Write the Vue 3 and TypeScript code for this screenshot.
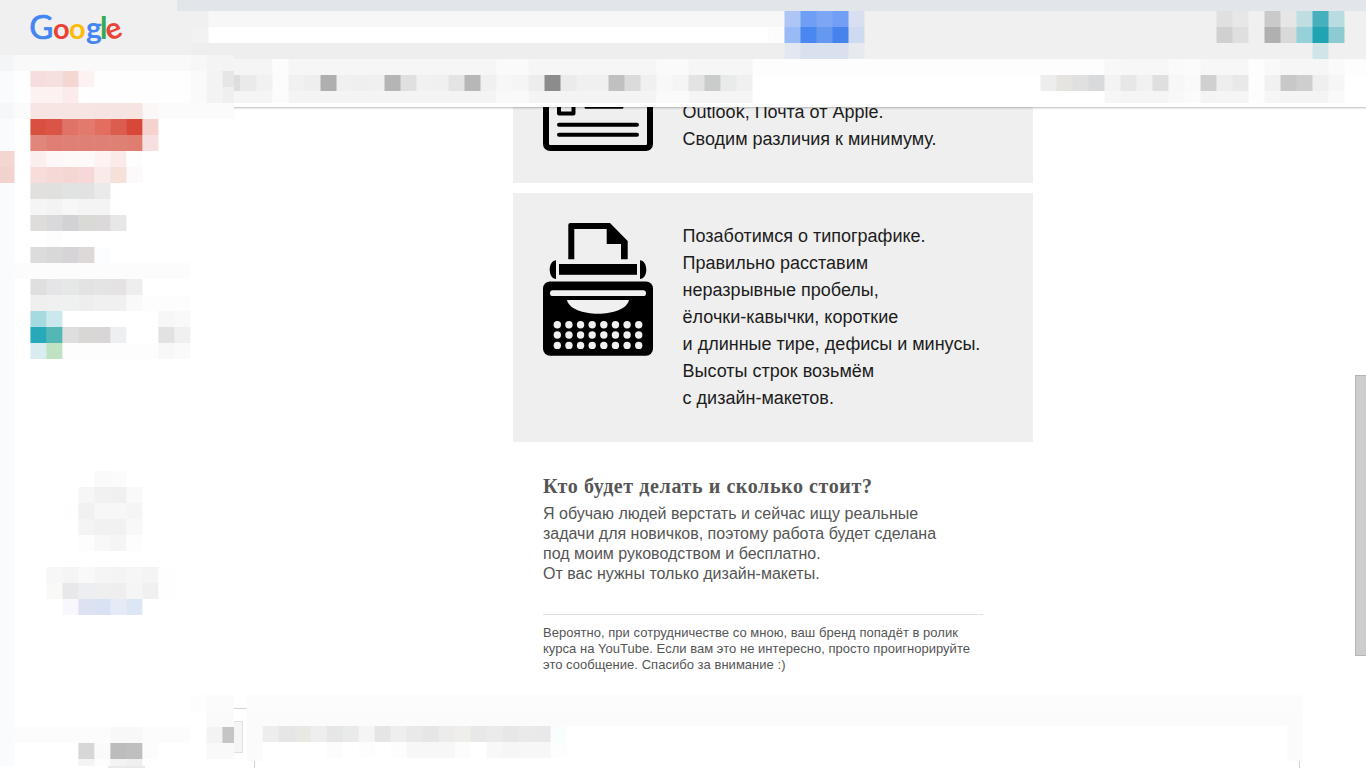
<script setup lang="ts">
interface Cell { x: number; y: number; w: number; h: number; fill: string }

const CELL = 16

/* One horizontal run of blocks. Each block reaches slightly under its neighbour, so no seam shows. */
function run(x: number, y: number, colors: string, h: number = CELL): Cell[] {
  const list = colors.split(' ')
  return list
    .map((c, i) => ({
      x: x + i * CELL,
      y,
      w: i < list.length - 1 && list[i + 1] !== '-' ? CELL + 0.5 : CELL,
      h,
      fill: '#' + c
    }))
    .filter((c) => c.fill !== '#-')
}

function block(x: number, y: number, w: number, h: number, color: string): Cell {
  return { x, y, w, h, fill: '#' + color }
}

const headerCells: Cell[] = [
  block(177, 0, 1189, 11, 'e2e5ea'),
  block(192.5, 27, 16, 16, 'f2f2f2'),
  block(208.5, 11, 576, 16, 'f7f7f7'),
  block(208.5, 27, 560, 16, 'ffffff'),
  block(768.5, 27, 16, 16, 'fcfcfc'),
  block(192.5, 43, 592, 16, 'eeeeee'),
  ...run(784.5, 11, 'adc6f5 6f9ff5 7da7f4 729ff5 d7dff1'),
  ...run(784.5, 27, '98baf5 4a87f0 6698f0 4683ed cedaf0'),
  ...run(784.5, 43, 'e3e7ef dae1ee dae1ee dae1ee e7eaef'),
  ...run(1216.5, 11, 'e0e0e0 e7e7e7 - cacaca e6e6e6 c0dde2 46b0bc b8dce0'),
  ...run(1216.5, 27, 'd0d0d0 dfdfdf - b0b0b0 d9d9d9 96d0d8 20a3b2 8dcad1'),
  ...run(1312.5, 43, 'd0e5e8')
]

const toolbarCells: Cell[] = [
  block(0, 0, 1366, 16, 'fdfdfd'),
  block(234, 0, 38.5, 44, 'f5f5f5'),
  block(272.5, 0, 16, 44, 'fcfcfc'),
  block(288.5, 0, 208, 16, 'f6f6f6'),
  block(288.5, 32, 208, 12, 'f4f4f4'),
  block(496.5, 0, 32, 16, 'fafafa'),
  block(496.5, 32, 32, 12, 'f9f9f9'),
  block(528.5, 0, 128, 16, 'f6f6f6'),
  block(528.5, 32, 128, 12, 'f4f4f4'),
  block(656.5, 0, 32, 44, 'fafafa'),
  block(688.5, 0, 64, 16, 'f6f6f6'),
  block(688.5, 32, 64, 12, 'f5f5f5'),
  block(234, 16, 6.5, 16, 'dedede'),
  ...run(
    240.5,
    16,
    'eaeaea f1f1f1 fcfcfc f1f1f1 eeeeee afafaf f0f0f0 efefef f0f0f0 b5b5b5 e0e0e0 f1f1f1 f0f0f0 e4e4e4 b7b7b7 f0f0f0 f7f7f7 f5f5f5 ededed 8c8c8c ebebeb f0f0f0 f0f0f0 c0c0c0 dbdbdb f0f0f0 f8f8f8 f5f5f5 e3e3e3 cacccb e9ebea f0f0f0'
  ),
  ...run(
    1104.5,
    0,
    'f8f8f8 f7f7f7 f7f7f7 f7f7f7 fafafa fbfbfb f7f7f7 f7f7f7 f7f7f7 fdfdfd f9f9f9 f6f6f6 f6f6f6 f6f6f6 fafafa'
  ),
  ...run(
    1040.5,
    16,
    'ededed e5e4e1 e0e0e0 d8dadc f3f3f3 e7e7e7 f1f1f1 dfdfdf f7f7f7 fafafa d0d0d0 eeeeee e9e9e9 fdfdfd f1f1f1 c8c8c8 cecece efefef f6f6f6'
  ),
  ...run(
    1104.5,
    32,
    'f6f6f6 f5f5f5 f5f5f5 f5f5f5 f8f8f8 fbfbfb f4f4f4 f5f5f5 f5f5f5 fdfdfd f6f6f6 f4f4f4 f4f4f4 f4f4f4 f9f9f9',
    12
  )
]

const SIDE = 30.4

const sidebarCells: Cell[] = [
  block(14.5, 55, 219.5, 64, 'fefefe'),
  block(0, 55, 14.5, 711, 'f9fbfd'),
  block(0, 55, 14.5, 16, 'f3f5f7'),
  block(14.5, 55, 176, 16, 'f9f9f9'),
  block(190.4, 55, 16, 16, 'f7f7f7'),
  block(206.4, 55, 27.6, 16, 'f4f4f4'),
  ...run(SIDE, 71, 'f6dedd f6e0df f4d6d3 fcf2f2'),
  ...run(SIDE, 87, 'fcf2f1 fcf2f1 fbeceb'),
  block(190.4, 71, 16, 32, 'fafafa'),
  block(206.4, 71, 16, 32, 'f3f3f3'),
  block(222.4, 71, 11.6, 16, 'e6e6e6'),
  block(222.4, 87, 11.6, 16, 'efefef'),
  block(0, 103, 14.5, 16, 'f5f7f9'),
  block(14.5, 103, 219.5, 16, 'fbfbfb'),
  ...run(SIDE, 103, 'f6e5e3 f6e5e2 f6e5e2 f6e5e2 f6e4e2 f6e4e2 f6e4e1 fbf7f6'),
  ...run(SIDE, 119, 'd9503e da5447 e07268 e27a70 e26e5f dc5c4f d84838 f5d2cd'),
  ...run(SIDE, 135, 'e1867b e07e73 df8074 df8074 df8074 df8074 e07d71 f6e0df'),
  block(0, 151, 14.5, 16, 'f3d6d2'),
  block(0, 167, 14.5, 16, 'f1d2ce'),
  ...run(SIDE, 151, 'fbefee fdf8f7 fdf9f8 fdf9f8 fcf3f2 faeae8 fefdfd'),
  ...run(SIDE, 167, 'f7dcdc f5d9d6 f4d7d3 f6d8d8 faebea f6e0da fdf9fb'),
  ...run(SIDE, 183, 'e1e0de e0e0df e1e3e2 e1e2e1 eaeaea'),
  ...run(SIDE, 199, 'f5f5f5 f3f3f3 f7f7f7 f4f4f4 f4f4f4'),
  ...run(SIDE, 215, 'dedddb d9d8da d2d2d4 d9d9d6 dcd9da e7e7e7'),
  ...run(46.4, 231, 'fdfdfd'),
  ...run(SIDE, 247, 'dcdcdc d8d8d8 d6d4d7 ded9d7 fcfdff'),
  block(14.5, 263, 176, 16, 'fcfcfc'),
  ...run(SIDE, 279, 'dfdfdf e5e5e8 e6e8e7 e3e3e3 e4e4e4 e4e2e2 eeeeee'),
  ...run(SIDE, 295, 'efefef f0f0f0 eff1f0 eeeeee f0f0f0 f0f0f0 f9f9f9 fdfdfd fdfdfd fdfdfd'),
  ...run(SIDE, 311, 'a5dae0 cbe9ec'),
  ...run(158.4, 311, 'f7f7f7 f9f9f9'),
  ...run(SIDE, 327, '27a9b9 53b7b6 dedede d8d7d5 d9d6d7 eeeff1'),
  ...run(158.4, 327, 'e2e2e2 f0f0f0'),
  ...run(SIDE, 343, 'd9edf0 bfe3c2 fdfdfd fdfdfd fdfdfd fdfdfd fdfdfd fdfdfd f8f8f8 fafafa'),
  ...run(94.4, 471, 'fafafa fbfbfb'),
  ...run(78.4, 487, 'f6f6f6 f1f1f1 f0f0f0 f9f9f9'),
  ...run(62.4, 503, 'fefefe f1f1f1 f7f7f7 f7f7f7 f5f5f5'),
  ...run(78.4, 519, 'f4f4f4 f1f1f1 f1f1f1 f8f8f8'),
  ...run(78.4, 535, 'fdfdfd f8f8f8 f5f5f5 fdfdfd'),
  ...run(46.4, 567, 'f7f7f7 f5f5f5 f9f9f9 f5f5f5 f4f4f4 f6f6f6 f4f4f4 fefefe'),
  ...run(46.4, 583, 'f9faf7 e8e8ea eceef1 efefef eeeeee f5f5f5 f0f0f0 fefefe'),
  ...run(62.4, 599, 'f8f7fd dde2f2 d8e2f3 e6eaf6 dce6f4'),
  block(190.4, 695, 16, 16, 'fdfdfd'),
  block(206.4, 695, 27.6, 16, 'fbfbfb'),
  block(206.4, 711, 27.6, 16, 'fafafa'),
  block(14.5, 727, 176, 16, 'fcfcfc'),
  ...run(110.4, 727, 'f8f8f8 f8f8f8'),
  block(206.4, 727, 16, 16, 'f3f3f3'),
  block(222.4, 727, 11.6, 16, 'c5c5c5'),
  ...run(78.4, 743, 'd7d7d7 fafafa bcbcbc bfbfbf fcfcfc'),
  block(206.4, 743, 27.6, 16, 'f9f9f9'),
  ...run(78.4, 759, 'f4f4f4 fdfdfd f3f3f3 efefef', 7),
  block(108, 766, 37, 2, 'e9e9e9')
]

const composeCells: Cell[] = [
  block(0, 13, 13, 1, 'd4d4d4'),
  block(0, 26, 9, 32, 'e0e0e0'),
  block(0, 27, 8, 30, 'f5f5f5'),
  block(20, 60, 1, 13, 'd0d0d0'),
  block(1065, 60, 1, 13, 'd0d0d0'),
  block(12.7, 0, 1056.3, 66, 'fbfbfb'),
  block(12.7, 0, 1056.3, 15, 'fcfcfc'),
  block(29, 31, 1024, 35, 'ffffff'),
  ...run(
    28.7,
    31,
    'ededed e6e6e6 e8e8e5 eeeeee e6e6e6 e8ebea f5f5f5 e5e5e5 eeeeee e9e9e9 e6e6e6 ececea efeeea e8e8e8 ebebeb e7e7e7 eaeaea e9e9e9 fafdfd'
  ),
  ...run(
    92.7,
    47,
    'fcfcfc - fdfdfd - fdfdfd f7f7f7 f7f7f7 f7f7f7 fcfcfc - f8f8f8 f6f6f6 f7f7f7 f7f7f7 fdfdfd'
  )
]

const logoLetters = [
  { ch: 'G', x: 41.2, size: 33, weight: 400, turn: 0, color: '#4285f4' },
  { ch: 'o', x: 61.4, size: 29, weight: 700, turn: 0, color: '#ea4335' },
  { ch: 'o', x: 77.4, size: 29, weight: 700, turn: 0, color: '#fbbc05' },
  { ch: 'g', x: 94, size: 30, weight: 700, turn: 0, color: '#4285f4' },
  { ch: 'l', x: 103.8, size: 30, weight: 700, turn: 0, color: '#34a853' },
  { ch: 'e', x: 114, size: 30, weight: 700, turn: -22, color: '#ea4335' }
]

const mailLines = ['Outlook, Почта от Apple.', 'Сводим различия к минимуму.']
const typeLines = [
  'Позаботимся о типографике.',
  'Правильно расставим',
  'неразрывные пробелы,',
  'ёлочки-кавычки, короткие',
  'и длинные тире, дефисы и минусы.',
  'Высоты строк возьмём',
  'с дизайн-макетов.'
]
const offerLines = [
  'Я обучаю людей верстать и сейчас ищу реальные',
  'задачи для новичков, поэтому работа будет сделана',
  'под моим руководством и бесплатно.',
  'От вас нужны только дизайн-макеты.'
]
const noteLines = [
  'Вероятно, при сотрудничестве со мною, ваш бренд попадёт в ролик',
  'курса на YouTube. Если вам это не интересно, просто проигнорируйте',
  'это сообщение. Спасибо за внимание :)'
]

const keys = Array.from({ length: 24 }, (_, i) => ({
  cx: 14.3 + (i % 8) * 11.63,
  cy: 101.7 + Math.floor(i / 8) * 10.35
}))
</script>

<template>
  <div class="window">
    <header class="header">
      <svg width="1366" height="59" viewBox="0 0 1366 59">
        <rect v-for="(c, i) in headerCells" :key="i" :x="c.x" :y="c.y" :width="c.w" :height="c.h" :fill="c.fill" />
        <g class="logo">
          <text
            v-for="(l, i) in logoLetters"
            :key="i"
            :x="l.x"
            y="38.8"
            :font-size="l.size"
            :font-weight="l.weight"
            :fill="l.color"
            :stroke="l.color"
            :stroke-width="l.ch === 'G' ? 0.7 : 0"
            :transform="`rotate(${l.turn} ${l.x} 31.500)`"
          >{{ l.ch }}</text>
        </g>
      </svg>
    </header>

    <div class="toolbar">
      <svg width="1366" height="48" viewBox="0 0 1366 48">
        <rect v-for="(c, i) in toolbarCells" :key="i" :x="c.x" :y="c.y" :width="c.w" :height="c.h" :fill="c.fill" />
      </svg>
    </div>

    <main class="main">
      <aside class="sidebar">
        <svg width="234" height="713" viewBox="0 55 234 713">
          <rect v-for="(c, i) in sidebarCells" :key="i" :x="c.x" :y="c.y" :width="c.w" :height="c.h" :fill="c.fill" />
        </svg>
      </aside>

      <section class="pane">
        <article class="letter">
          <div class="card card-cut">
            <svg class="icon" width="110" height="52" viewBox="0 0 110 52" fill="none" stroke="#000">
              <path d="M3 0V45a4 4 0 0 0 4 4H103a4 4 0 0 0 4-4V0" stroke-width="6" />
              <path d="M16 0V14.500H30.500V0" stroke-width="4" stroke-linejoin="round" />
              <path d="M43 8.300H79" stroke-width="3" stroke-linecap="round" />
              <path d="M16 25.800H94M16 35.700H94" stroke-width="4" stroke-linecap="round" />
            </svg>
            <p class="lead"><span v-for="t in mailLines" :key="t">{{ t }}</span></p>
          </div>

          <div class="card">
            <svg class="icon" width="110" height="133" viewBox="0 0 110 133">
              <path
                fill-rule="evenodd"
                d="M25.300 36.300V2a2 2 0 0 1 2-2H67L84.700 18V36.300H78V21H63.700V6H31.300V36.300Z"
              />
              <rect x="16" y="41" width="78" height="10.800" />
              <path d="M13 37.300V56C9.500 56 6.700 52 6.700 46.700S9.500 37.300 13 37.300ZM97 37.300V56c3.500 0 6.300-4 6.300-9.300S100.500 37.300 97 37.300Z" />
              <rect x="0" y="58.400" width="110" height="74.300" rx="7" />
              <rect x="7" y="67.300" width="96" height="5.800" rx="2.900" fill="#f0f0f0" />
              <path d="M24 77H86C84 86 70 90.700 55 90.700S26 86 24 77Z" fill="#f0f0f0" />
              <circle v-for="(k, i) in keys" :key="i" :cx="k.cx" :cy="k.cy" r="3.700" fill="#f0f0f0" />
            </svg>
            <p class="lead"><span v-for="t in typeLines" :key="t">{{ t }}</span></p>
          </div>

          <div class="offer">
            <h2>Кто будет делать и сколько стоит?</h2>
            <p class="body"><span v-for="t in offerLines" :key="t">{{ t }}</span></p>
            <p class="note"><span v-for="t in noteLines" :key="t">{{ t }}</span></p>
          </div>
        </article>

        <svg class="compose" width="1069" height="73" viewBox="0 0 1069 73">
          <rect v-for="(c, i) in composeCells" :key="i" :x="c.x" :y="c.y" :width="c.w" :height="c.h" :fill="c.fill" />
        </svg>
      </section>

      <div class="scroll"><div class="thumb"></div></div>
    </main>
  </div>
</template>

<style>
body {
  margin: 0;
  background: #fff;
  overflow: hidden;
}
</style>

<style scoped>
.window {
  width: 1366px;
  height: 768px;
  display: flex;
  flex-direction: column;
  overflow: hidden;
  background: #fff;
  font-family: "Liberation Sans", Arial, sans-serif;
}
svg {
  display: block;
  flex: none;
}
.header {
  height: 59px;
  background: #f0f0f0;
}
.logo {
  font-family: Lato, sans-serif;
  text-anchor: middle;
}
.toolbar {
  position: relative;
  height: 48px;
  background: #fff;
  box-shadow: 0 1px 0 rgba(0, 0, 0, 0.12), 0 2px 0 rgba(0, 0, 0, 0.06), 0 3px 0 rgba(0, 0, 0, 0.02);
}
.main {
  flex: 1;
  min-height: 0;
  display: flex;
}
.sidebar {
  position: relative;
  width: 234px;
  margin-top: -52px;
}
.pane {
  flex: 1;
  min-width: 0;
  overflow: hidden;
}
.letter {
  width: 520px;
  height: 596px;
  margin: -8px 0 0 279px;
  display: flex;
  flex-direction: column;
}
.card {
  display: flex;
  gap: 29.6px;
  padding: 30px;
  margin-bottom: 10px;
  background: #efefef;
}
.card-cut {
  padding-top: 0;
}
p,
h2 {
  margin: 0;
}
p span {
  display: block;
  white-space: nowrap;
}
.lead {
  font-size: 18px;
  line-height: 27px;
  color: #1c1c1c;
}
.offer {
  width: 440px;
  padding: 22px 30px 0;
  color: #555;
}
h2 {
  font-family: Georgia, "Liberation Serif", serif;
  font-size: 20px;
  line-height: 24px;
  font-weight: 700;
  letter-spacing: 0.6px;
  white-space: nowrap;
}
.body {
  padding: 6px 0 30px;
  font-size: 16px;
  line-height: 20px;
}
.note {
  border-top: 1px solid #e0e0e0;
  padding-top: 10px;
  font-size: 13px;
  line-height: 16px;
  letter-spacing: 0.028px;
}
.scroll {
  width: 11px;
  padding-top: 268px;
}
.thumb {
  box-sizing: border-box;
  height: 281px;
  background: #cdcdcd;
  border: 1px solid #b6b6b6;
  border-right: 0;
}
</style>
